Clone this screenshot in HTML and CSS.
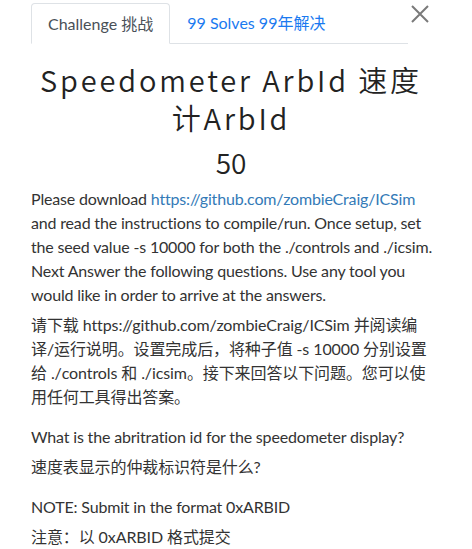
FILE: index.html
```html
<!DOCTYPE html>
<html>
<head>
<meta charset="utf-8">
<link rel="stylesheet" href="styles.css">
</head>
<body>
<div class="modal">
  <button class="close" aria-label="Close">
    <svg width="18" height="18" viewBox="0 0 18 18"><path d="M1 1L17 17M17 1L1 17" stroke="#7a7a7a" stroke-width="2" fill="none"/></svg>
  </button>
  <div class="tabs">
    <div class="tab active">Challenge 挑战</div>
    <div class="tab link">99 Solves 99年解决</div>
  </div>
  <h2 class="title">Speedometer ArbId 速度计ArbId</h2>
  <h3 class="value">50</h3>
  <div class="desc">
    <p class="en">Please download <a href="#">https://github.com/zombieCraig/ICSim</a> and read the instructions to compile/run. Once setup, set the seed value -s 10000 for both the ./controls and ./icsim. Next Answer the following questions. Use any tool you would like in order to arrive at the answers.</p>
    <p class="zh">请下载 https://github.com/zombieCraig/ICSim 并阅读编译/运行说明。设置完成后，将种子值 -s 10000 分别设置给 ./controls 和 ./icsim。接下来回答以下问题。您可以使用任何工具得出答案。</p>
    <p class="en">What is the abritration id for the speedometer display?</p>
    <p class="zh">速度表显示的仲裁标识符是什么?</p>
    <p class="en">NOTE: Submit in the format 0xARBID</p>
    <p class="zh">注意：以 0xARBID 格式提交</p>
  </div>
</div>
</body>
</html>
```

FILE: styles.css
```css
html, body {
  margin: 0;
  padding: 0;
  background: #fff;
}
body {
  font-family: Lato, "Noto Sans CJK SC", sans-serif;
  color: #333;
}
.modal {
  position: relative;
  width: 400px;
  padding: 3px 0 0 31px;
}
.close {
  position: absolute;
  left: 411px;
  top: 5px;
  border: 0;
  background: none;
  padding: 0;
  width: 18px;
  height: 18px;
}
.close svg { display: block; }
.tabs {
  display: flex;
  border-bottom: 1px solid #dee2e6;
  height: 40px;
  margin-right: 23px;
}
.tab {
  font-size: 16px;
  line-height: 24px;
  padding: 8px 16px;
  box-sizing: border-box;
  height: 41px;
}
.tab.active {
  color: #495057;
  border: 1px solid #dee2e6;
  border-bottom-color: #fff;
  border-radius: 4px 4px 0 0;
  background: #fff;
}
.tab.link {
  color: #1a7af0;
  padding-left: 17px;
}
.title {
  font-family: "Noto Sans CJK SC", sans-serif;
  font-weight: 350;
  font-size: 29px;
  line-height: 38px;
  letter-spacing: 2.85px;
  text-align: center;
  color: #222;
  margin: 16px 0 0;
}
.value {
  font-family: "Noto Sans CJK SC", sans-serif;
  font-weight: 350;
  font-size: 28px;
  line-height: 36px;
  text-align: center;
  color: #222;
  margin: 8px 0 7px;
}
.desc {
  font-size: 16px;
  line-height: 24px;
  color: #333;
}
.desc p { margin: 0; }
.desc .en {
  margin: 0 -8px 6px 0;
  letter-spacing: -0.17px;
}
.desc .zh {
  margin-bottom: 16px;
  letter-spacing: -0.1px;
}
.desc a {
  color: #337ab7;
  text-decoration: none;
}
```
